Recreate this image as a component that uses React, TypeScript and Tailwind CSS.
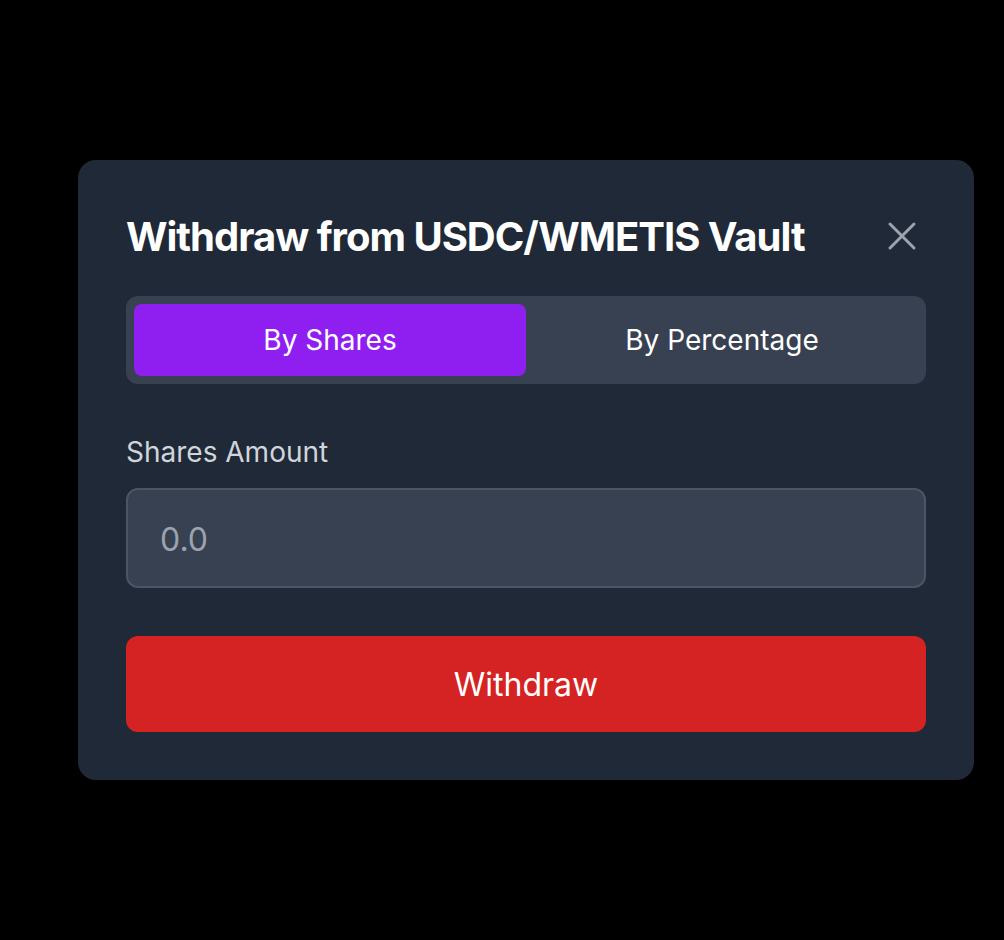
import React, { useState } from "react";

export default function App() {
  const [mode, setMode] = useState<"shares" | "percent">("shares");
  return (
    <div
      className="min-h-screen w-full bg-black pt-[160px] pl-[78px]"
      style={{ fontFamily: "Inter, 'Noto Sans', sans-serif" }}
    >
      <div className="w-[896px] rounded-[18px] bg-[#1f2937] p-[48px] flex flex-col">
        <div className="flex items-center justify-between h-[56px]">
          <h2 className="text-[40px] leading-[56px] font-bold text-white tracking-[-1px] pt-[2px]">
            Withdraw from USDC/WMETIS Vault
          </h2>
          <button className="w-[48px] h-[48px] flex items-center justify-center text-[#9ca3af]">
            <svg
              width="48"
              height="48"
              viewBox="0 0 24 24"
              fill="none"
              stroke="currentColor"
              strokeWidth={1.5}
              strokeLinecap="round"
              strokeLinejoin="round"
            >
              <path d="M6 18L18 6M6 6l12 12" />
            </svg>
          </button>
        </div>

        <div className="mt-[32px] flex rounded-[12px] bg-[#374151] p-[8px]">
          <button
            onClick={() => setMode("shares")}
            className={`flex-1 h-[72px] rounded-[8px] text-[28px] text-white flex items-center justify-center ${
              mode === "shares" ? "bg-[#8f1ff1]" : "bg-transparent"
            }`}
          >
            By Shares
          </button>
          <button
            onClick={() => setMode("percent")}
            className={`flex-1 h-[72px] rounded-[8px] text-[28px] text-white flex items-center justify-center ${
              mode === "percent" ? "bg-[#8f1ff1]" : "bg-transparent"
            }`}
          >
            By Percentage
          </button>
        </div>

        <label className="mt-[48px] text-[28px] leading-[40px] text-[#d1d5db]">
          Shares Amount
        </label>

        <input
          placeholder="0.0"
          className="mt-[16px] h-[100px] w-full rounded-[12px] border-2 border-[#4b5563] bg-[#374151] px-[32px] pt-[3px] text-[32px] text-white placeholder:text-[#9ca3af] outline-none"
        />

        <button className="mt-[48px] h-[96px] w-full rounded-[12px] bg-[#d42322] text-[32px] text-white flex items-center justify-center pt-[2px]">
          Withdraw
        </button>
      </div>
    </div>
  );
}
